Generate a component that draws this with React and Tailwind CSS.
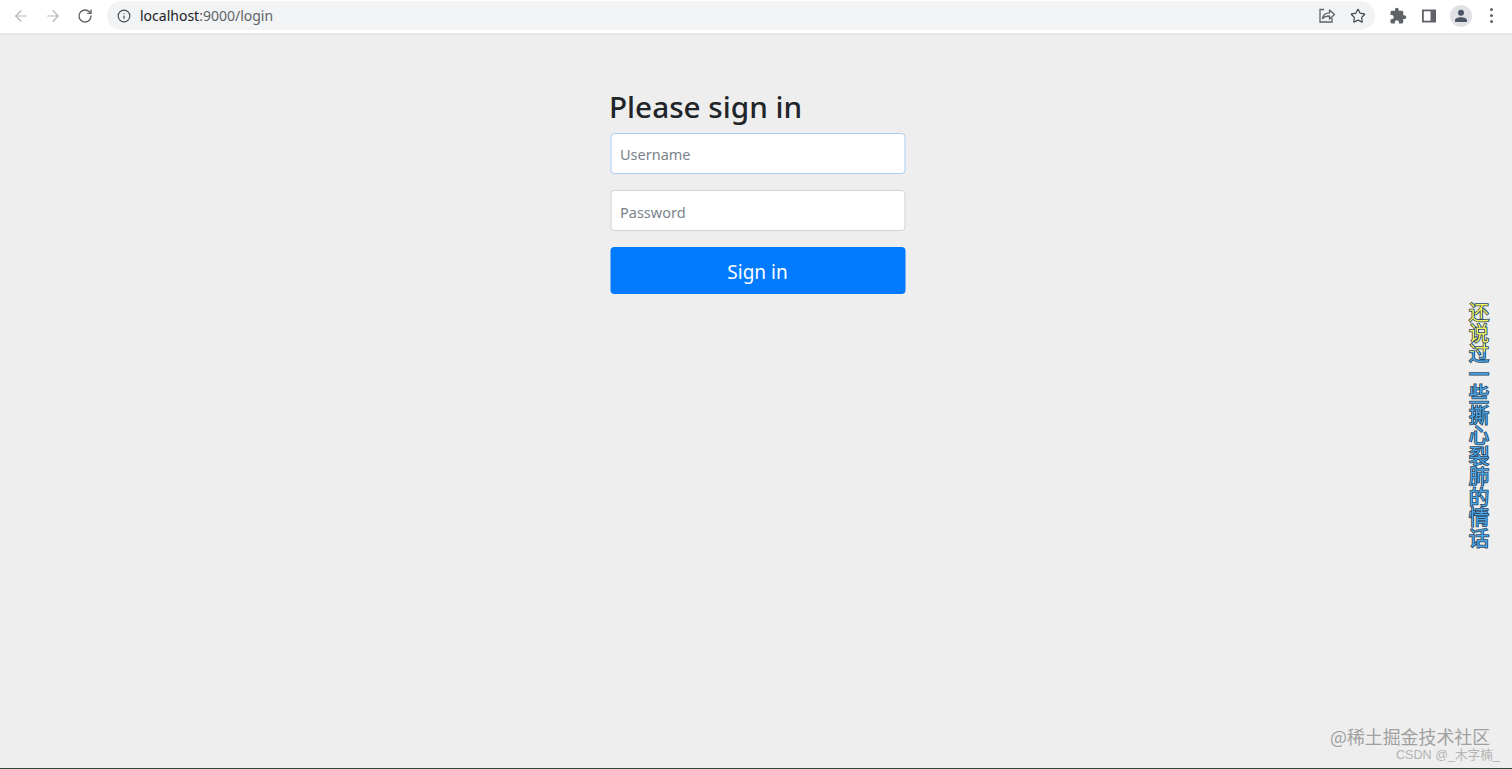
import { ArrowLeft, ArrowRight, RotateCw, Info, Star } from 'lucide-react';

const sans = "font-['Noto_Sans','Noto_Sans_CJK_SC',sans-serif]";
const lyric = '还说过一些撕心裂肺的情话';

function ShareIcon() {
  return (
    <svg width="18" height="18" viewBox="0 0 18 18" fill="none" stroke="#5f6368" strokeWidth="1.3">
      <path d="M6 2.5H2v12.5h12v-4" />
      <path d="M4.5 11.5c.6-3.6 3-5.6 7-5.6V3l5 4.6-5 4.4V9c-3 0-5.200.6-7 2.500z" strokeLinejoin="round" />
    </svg>
  );
}

function PuzzleIcon() {
  return (
    <svg width="18" height="18" viewBox="0 0 24 24" fill="#5f6368">
      <path d="M20.5 11H19V7c0-1.100-.9-2-2-2h-4V3.500C13 2.120 11.880 1 10.500 1S8 2.120 8 3.500V5H4c-1.100 0-1.990.9-1.990 2v3.800H3.500c1.490 0 2.700 1.210 2.700 2.700s-1.210 2.700-2.700 2.700H2V20c0 1.100.9 2 2 2h3.800v-1.500c0-1.490 1.210-2.700 2.700-2.700 1.490 0 2.700 1.210 2.700 2.700V22H17c1.100 0 2-.9 2-2v-4h1.500c1.380 0 2.500-1.120 2.500-2.500S21.880 11 20.500 11z" />
    </svg>
  );
}

function SidePanelIcon() {
  return (
    <svg width="16" height="16" viewBox="0 0 16 16">
      <path d="M1 1.500h14v13H1z" fill="#5f6368" />
      <path d="M2.800 3.300h6.700v9.400H2.800z" fill="#fff" />
    </svg>
  );
}

function ProfileIcon() {
  return (
    <div className="flex h-[22px] w-[22px] items-center justify-center rounded-full bg-[#dfe1e5]">
      <svg width="16" height="16" viewBox="0 0 16 16" fill="#4d5566">
        <circle cx="8" cy="4.800" r="3" />
        <path d="M2 14v-1.500C2 10.500 5 9.300 8 9.300s6 1.200 6 3.200V14z" />
      </svg>
    </div>
  );
}

function Toolbar() {
  return (
    <div className={`flex h-[35px] items-center border-b-2 border-[#e6e6e6] bg-white pb-[2px] pl-[12px] pr-[11px] ${sans}`}>
      <ArrowLeft size={18} strokeWidth={1.6} className="text-[#b4b6b9]" />
      <ArrowRight size={18} strokeWidth={1.6} className="ml-[14px] text-[#b4b6b9]" />
      <RotateCw size={16} strokeWidth={2} className="ml-[15px] text-[#5f6368]" />
      <div className="ml-[14px] flex h-[29px] w-[1268px] items-center rounded-full bg-[#f1f3f4] pl-[10px] pr-[9px]">
        <Info size={14} strokeWidth={2} className="text-[#45484c]" />
        <span className="ml-[9px] text-[14px] text-[#202124]">
          localhost<span className="text-[#5f6368]">:9000/login</span>
        </span>
        <div className="ml-auto flex items-center gap-[14px]">
          <ShareIcon />
          <Star size={16} strokeWidth={1.8} className="text-[#45484c]" />
        </div>
      </div>
      <div className="ml-[14px] flex items-center">
        <PuzzleIcon />
        <div className="ml-[14px]"><SidePanelIcon /></div>
        <div className="ml-[13px]"><ProfileIcon /></div>
        <div className="ml-[18px] flex flex-col gap-[3px]">
          <span className="h-[3px] w-[3px] rounded-full bg-[#5f6368]" />
          <span className="h-[3px] w-[3px] rounded-full bg-[#5f6368]" />
          <span className="h-[3px] w-[3px] rounded-full bg-[#5f6368]" />
        </div>
      </div>
    </div>
  );
}

function LoginForm() {
  return (
    <form className={`mx-auto flex w-[295px] translate-x-[1.500px] flex-col pt-[50px] ${sans}`}>
      <h1 className="-ml-[1px] whitespace-nowrap text-[29.700px] font-medium leading-[44px] text-[#212529]">Please sign in</h1>
      <input
        placeholder="Username"
        className="mt-[4px] h-[41px] rounded-[4px] border border-[#a9cdf5] bg-white px-[9px] pt-[1px] text-[14.500px] outline-none placeholder:text-[#7b838a]"
      />
      <input
        placeholder="Password"
        className="mt-[16px] h-[41px] rounded-[4px] border border-[#ced4da] bg-white px-[9px] pt-[2px] text-[14.500px] outline-none placeholder:text-[#7b838a]"
      />
      <button type="button" className="mt-[16px] h-[47px] rounded-[4px] bg-[#007bff] pt-[4px] text-[19px] text-white">
        Sign in
      </button>
    </form>
  );
}

export default function App() {
  return (
    <div className="relative h-[769px] overflow-hidden border-b border-[#2d4a3e] bg-[#eeeeee]">
      <Toolbar />
      <LoginForm />

      {/* floating lyrics: outline layer with the gradient fill on top */}
      <div className="absolute left-[1467px] top-[302px] text-[20.500px] leading-[23px] font-['Noto_Sans_CJK_SC',sans-serif] [writing-mode:vertical-rl]">
        <div className="text-[#2c4a66] [-webkit-text-stroke:1.500px_#2c4a66]">{lyric}</div>
        <div className="absolute inset-0 bg-[linear-gradient(to_bottom,#f0f060_20%,#4aa6e6_20.500%)] bg-clip-text text-transparent">
          {lyric}
        </div>
      </div>

      {/* watermarks */}
      <div className="absolute left-[1330px] top-[724px] text-[17.900px] leading-[24px] text-[#a0a0a0] font-['Noto_Sans_CJK_SC',sans-serif]">
        @稀土掘金技术社区
      </div>
      <div className="absolute left-[1396px] top-[747px] text-[12.600px] leading-[17px] text-[#b4b4b4] font-['Liberation_Sans','Noto_Sans_CJK_SC',sans-serif]">
        CSDN @_木字楠_
      </div>
    </div>
  );
}
